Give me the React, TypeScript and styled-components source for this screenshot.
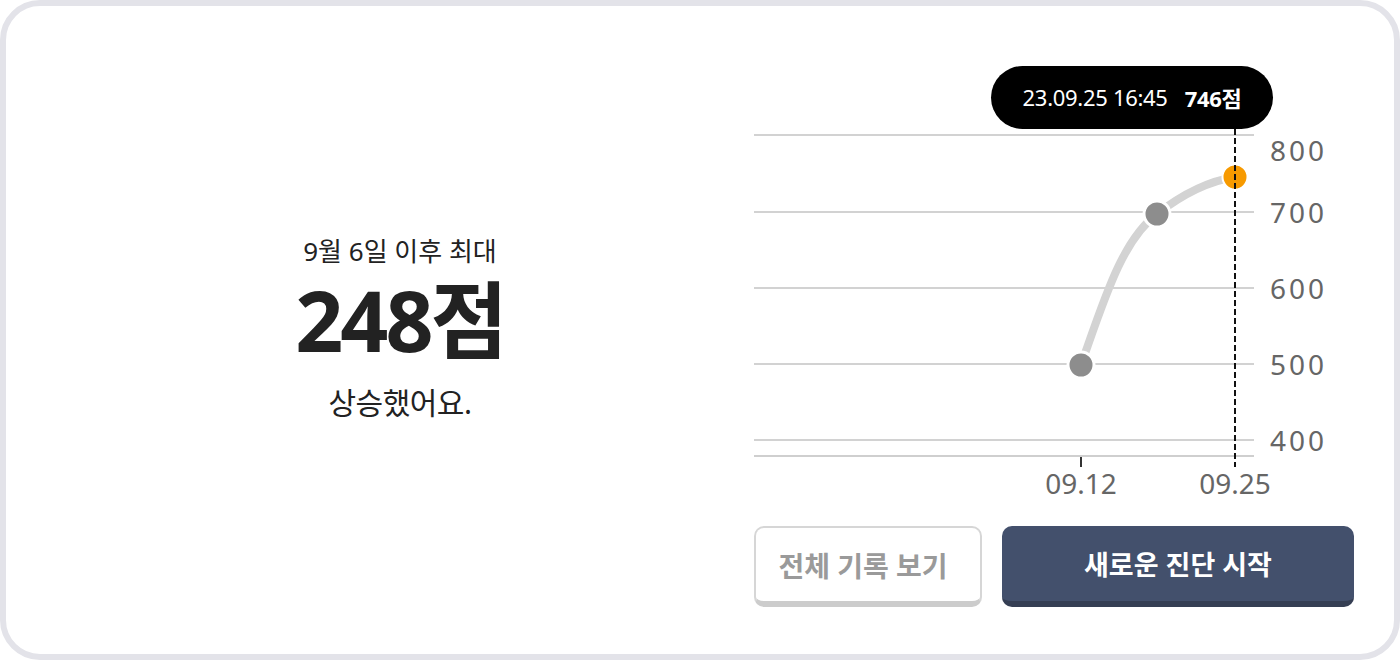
import styled, { createGlobalStyle } from 'styled-components';

const GlobalStyle = createGlobalStyle`
  html, body {
    margin: 0;
    padding: 0;
    background: #ffffff;
  }
  * {
    box-sizing: border-box;
  }
  body {
    font-family: "Noto Sans", "Noto Sans CJK KR", sans-serif;
  }
`;

const Card = styled.div`
  width: 1400px;
  height: 660px;
  border: 6px solid #e3e3e9;
  border-radius: 40px;
  background: #ffffff;
  display: flex;
  overflow: hidden;
`;

const Summary = styled.section`
  flex: 1;
  padding-left: 40px;
  display: flex;
  flex-direction: column;
  align-items: center;
  justify-content: center;
  color: #222222;
  padding-bottom: 4px;
`;

const Caption = styled.div`
  font-size: 26px;
  line-height: 34px;
`;

const Score = styled.div`
  font-size: 84px;
  font-weight: 700;
  letter-spacing: -3px;
  line-height: 90px;
  margin: 7px 0 19px;
`;

const Result = styled.div`
  font-size: 30px;
  letter-spacing: -0.5px;
  line-height: 38px;
`;

const Side = styled.section`
  width: 600px;
  margin-right: 40px;
  padding-top: 54px;
  display: flex;
  flex-direction: column;
  gap: 16px;
`;

const ChartBox = styled.div`
  position: relative;
  width: 600px;
  height: 450px;
`;

const Tooltip = styled.div`
  position: absolute;
  left: 237px;
  top: 6px;
  width: 282px;
  height: 63px;
  border-radius: 32px;
  background: #000000;
  color: #ffffff;
  display: flex;
  align-items: center;
  justify-content: center;
  gap: 17px;
  font-size: 22px;
  letter-spacing: -0.3px;
  padding-bottom: 2px;
`;

const TipScore = styled.b`
  font-weight: 700;
`;

const AxisText = styled.text<{ $anchor?: string }>`
  font-family: "Noto Sans", "Noto Sans CJK KR", sans-serif;
  font-size: 28px;
  fill: #666666;
  text-anchor: ${(p) => p.$anchor ?? 'start'};
`;

const Actions = styled.div`
  display: flex;
  gap: 20px;
`;

const Button = styled.button<{ $primary?: boolean }>`
  height: 81px;
  border-radius: 10px;
  font-family: "Noto Sans", "Noto Sans CJK KR", sans-serif;
  font-size: ${(p) => (p.$primary ? '27px' : '28px')};
  font-weight: 700;
  cursor: pointer;
  width: ${(p) => (p.$primary ? '352px' : '228px')};
  background: ${(p) => (p.$primary ? '#43506c' : '#ffffff')};
  color: ${(p) => (p.$primary ? '#ffffff' : '#9a9a9a')};
  border: ${(p) => (p.$primary ? 'none' : '2px solid #d6d6d6')};
  border-bottom: ${(p) => (p.$primary ? '6px solid #353e53' : '6px solid #cccccc')};
  padding: ${(p) => (p.$primary ? '0' : '0 10px 0 0')};
`;

const GRID = [
  { y: 75, label: '800', ly: 101 },
  { y: 152, label: '700', ly: 163 },
  { y: 228, label: '600', ly: 239 },
  { y: 304, label: '500', ly: 315 },
  { y: 380, label: '400', ly: 391 },
];

function Chart() {
  return (
    <svg width="600" height="450" viewBox="0 0 600 450">
      {GRID.map((g) => (
        <line key={g.label} x1="0" x2="500" y1={g.y} y2={g.y} stroke="#d2d2d2" strokeWidth="2" />
      ))}
      <line x1="0" x2="500" y1="396" y2="396" stroke="#cfcfcf" strokeWidth="2" />
      {GRID.map((g) => (
        <AxisText key={'l' + g.label} x="516" y={g.ly} letterSpacing="3">
          {g.label}
        </AxisText>
      ))}
      <line x1="327" x2="327" y1="397" y2="407" stroke="#333333" strokeWidth="2" />
      <AxisText x="327" y="434" $anchor="middle">09.12</AxisText>
      <AxisText x="481" y="434" $anchor="middle">09.25</AxisText>
      <path
        d="M327,305 C350,240 368,180 403,154 C430,133 455,121 481,117"
        fill="none"
        stroke="#d3d3d3"
        strokeWidth="8"
        strokeLinecap="round"
      />
      <circle cx="327" cy="305" r="13" fill="#8d8d8d" stroke="#ffffff" strokeWidth="3" />
      <circle cx="403" cy="154" r="13" fill="#8d8d8d" stroke="#ffffff" strokeWidth="3" />
      <circle cx="481" cy="117" r="12.5" fill="#f79a00" stroke="#ffffff" strokeWidth="2" />
      <line
        x1="481"
        x2="481"
        y1="69"
        y2="407"
        stroke="#111111"
        strokeWidth="2"
        strokeDasharray="6 3"
      />
    </svg>
  );
}

export default function App() {
  return (
    <>
      <GlobalStyle />
      <Card>
        <Summary>
          <Caption>9월 6일 이후 최대</Caption>
          <Score>248점</Score>
          <Result>상승했어요.</Result>
        </Summary>
        <Side>
          <ChartBox>
            <Chart />
            <Tooltip>
              <span>23.09.25 16:45</span>
              <TipScore>746점</TipScore>
            </Tooltip>
          </ChartBox>
          <Actions>
            <Button>전체 기록 보기</Button>
            <Button $primary>새로운 진단 시작</Button>
          </Actions>
        </Side>
      </Card>
    </>
  );
}
